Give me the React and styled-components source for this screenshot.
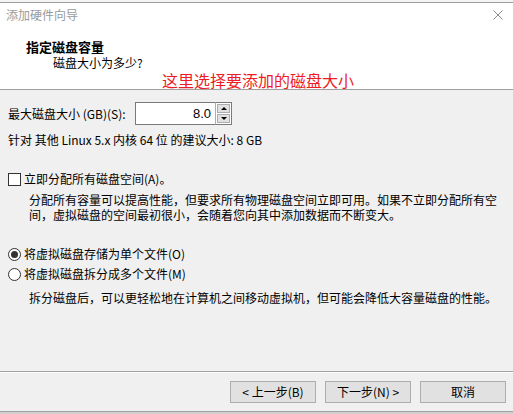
import React from 'react'
import styled, { createGlobalStyle } from 'styled-components'

const Global = createGlobalStyle`
  html, body {
    margin: 0;
    padding: 0;
    background: #f0f0f0;
  }
  * { box-sizing: border-box; }
`

const Frame = styled.div`
  width: 513px;
  height: 414px;
  display: flex;
  flex-direction: column;
  font-family: "Noto Sans CJK SC", "Microsoft YaHei", sans-serif;
  font-size: 12px;
  color: #000;
  overflow: hidden;
`

const Behind = styled.div`
  height: 3px;
  flex-shrink: 0;
  background: #f4f4f4;
  border-bottom: 1px solid #9c9c9c;
`

const Header = styled.div`
  height: 87px;
  flex-shrink: 0;
  background: #fff;
  border-bottom: 1px solid #a0a0a0;
  display: flex;
  flex-direction: column;
`

const TitleBar = styled.div`
  height: 26px;
  display: flex;
  align-items: center;
  justify-content: space-between;
  padding: 0 10px 0 6px;
`

const Caption = styled.span`
  color: #9a9a9a;
  font-size: 12px;
  line-height: 16px;
`

const HeadTitle = styled.div`
  margin: 12px 0 0 26px;
  font-weight: bold;
  font-size: 13px;
  line-height: 16px;
`

const HeadSub = styled.div`
  margin: 0 0 0 53px;
  line-height: 16px;
`

const Note = styled.div`
  margin: 0 0 0 162px;
  color: #ee1c25;
  font-size: 16px;
  line-height: 18px;
  white-space: nowrap;
`

const Body = styled.div`
  flex: 1;
  padding: 12px 8px 0 8px;
  display: flex;
  flex-direction: column;
`

const Row = styled.div`
  display: flex;
  align-items: center;
  margin-top: ${({ $gap }) => $gap || 0}px;
  line-height: 16px;
  white-space: nowrap;
`

const Label = styled.span`
  width: 127px;
`

const Spin = styled.div`
  display: flex;
  height: 23px;
`

const Field = styled.div`
  width: 80px;
  height: 23px;
  background: #fff;
  border: 1px solid #7a7a7a;
  border-right: none;
  text-align: right;
  padding-right: 4px;
  line-height: 21px;
  font-family: "Liberation Sans", Arial, sans-serif;
  font-size: 13px;
`

const Arrows = styled.div`
  width: 17px;
  display: flex;
  flex-direction: column;
  border: 1px solid #7a7a7a;
  border-left: 1px solid #adadad;
  background: #fff;
  padding: 1px;
  gap: 1px;
`

const Arrow = styled.div`
  flex: 1;
  background: #e1e1e1;
  border: 1px solid #adadad;
  display: flex;
  align-items: center;
  justify-content: center;
  &::after {
    content: '';
    border-left: 3px solid transparent;
    border-right: 3px solid transparent;
    ${({ $up }) => ($up ? 'border-bottom: 3px solid #000;' : 'border-top: 3px solid #000;')}
  }
`

const Box = styled.span`
  width: 13px;
  height: 13px;
  border: 1px solid #333;
  background: #fff;
  margin-right: 3px;
  flex-shrink: 0;
`

const Radio = styled.span`
  width: 13px;
  height: 13px;
  border: 1px solid #333;
  border-radius: 50%;
  background: #fff;
  margin-right: 3px;
  flex-shrink: 0;
  display: flex;
  align-items: center;
  justify-content: center;
  &::after {
    content: '';
    width: 7px;
    height: 7px;
    border-radius: 50%;
    background: ${({ $on }) => ($on ? '#333' : 'transparent')};
  }
`

const Desc = styled.div`
  margin: ${({ $gap }) => $gap || 0}px 0 0 21px;
  line-height: 15px;
  white-space: nowrap;
`

const Footer = styled.div`
  height: 40px;
  flex-shrink: 0;
  border-top: 1px solid #a0a0a0;
  box-shadow: inset 0 1px 0 #fff;
  display: flex;
  justify-content: flex-end;
  align-items: flex-start;
  gap: 9px;
  padding: 9px 7px 0 0;
`

const Button = styled.button`
  width: 86px;
  height: 22px;
  background: #e1e1e1;
  border: 1px solid #adadad;
  font-family: inherit;
  font-size: 12px;
  color: #000;
  padding: 0;
  line-height: 20px;
`

const Bottom = styled.div`
  height: 3px;
  flex-shrink: 0;
  border-top: 1px solid #a0a0a0;
  background: #cfcfcf;
`

const Close = () => (
  <svg width="10" height="10" viewBox="0 0 10 10">
    <path d="M0.5 0.5 L9.5 9.5 M9.5 0.5 L0.5 9.5" stroke="#8a8a8a" strokeWidth="1" />
  </svg>
)

const App = () => {
  return (
    <Frame>
      <Global />
      <Behind />
      <Header>
        <TitleBar>
          <Caption>添加硬件向导</Caption>
          <Close />
        </TitleBar>
        <HeadTitle>指定磁盘容量</HeadTitle>
        <HeadSub>磁盘大小为多少?</HeadSub>
        <Note>这里选择要添加的磁盘大小</Note>
      </Header>

      <Body>
        <Row>
          <Label>最大磁盘大小 (GB)(S):</Label>
          <Spin>
            <Field>8.0</Field>
            <Arrows>
              <Arrow $up />
              <Arrow />
            </Arrows>
          </Spin>
        </Row>
        <Row $gap={7}>针对 其他 Linux 5.x 内核 64 位 的建议大小: 8 GB</Row>

        <Row $gap={23}>
          <Box />
          立即分配所有磁盘空间(A)。
        </Row>
        <Desc $gap={5}>
          分配所有容量可以提高性能，但要求所有物理磁盘空间立即可用。如果不立即分配所有空
          <br />
          间，虚拟磁盘的空间最初很小，会随着您向其中添加数据而不断变大。
        </Desc>

        <Row $gap={24}>
          <Radio $on />
          将虚拟磁盘存储为单个文件(O)
        </Row>
        <Row $gap={4}>
          <Radio />
          将虚拟磁盘拆分成多个文件(M)
        </Row>
        <Desc $gap={8}>拆分磁盘后，可以更轻松地在计算机之间移动虚拟机，但可能会降低大容量磁盘的性能。</Desc>
      </Body>

      <Footer>
        <Button>&lt; 上一步(B)</Button>
        <Button>下一步(N) &gt;</Button>
        <Button>取消</Button>
      </Footer>
      <Bottom />
    </Frame>
  )
}

export default App
